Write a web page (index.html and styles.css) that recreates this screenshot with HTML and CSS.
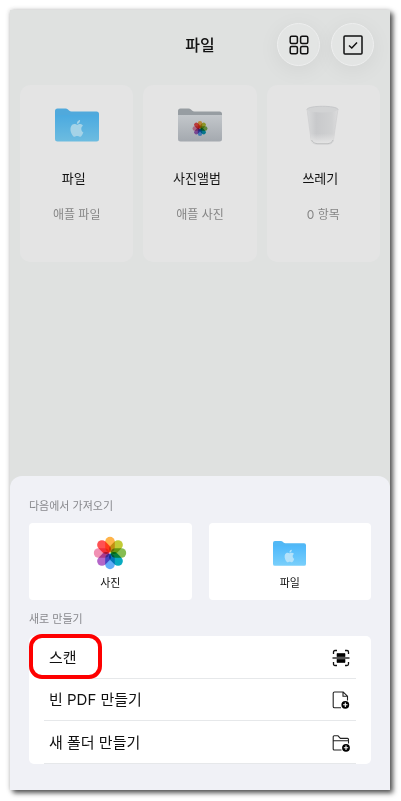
FILE: index.html
```html
<!DOCTYPE html>
<html lang="ko">
<head>
<meta charset="utf-8">
<meta name="viewport" content="width=device-width, initial-scale=1">
<title>파일</title>
<link rel="stylesheet" href="styles.css">
</head>
<body>
<svg class="defs" aria-hidden="true">
  <defs>
    <linearGradient id="blue" x1="0" y1="0" x2="0" y2="1">
      <stop offset="0" stop-color="#4fb9fb"/><stop offset="1" stop-color="#79cffb"/>
    </linearGradient>
    <linearGradient id="blue-dim" x1="0" y1="0" x2="0" y2="1">
      <stop offset="0" stop-color="#4baae0"/><stop offset="1" stop-color="#6dbce0"/>
    </linearGradient>
    <linearGradient id="gray" x1="0" y1="0" x2="0" y2="1">
      <stop offset="0" stop-color="#c3c7cb"/><stop offset="1" stop-color="#a4a9af"/>
    </linearGradient>
    <linearGradient id="glass" x1="0" y1="0" x2="1" y2="0">
      <stop offset="0" stop-color="#d9dadb"/><stop offset=".3" stop-color="#c8c9cb"/><stop offset=".8" stop-color="#d0d1d2"/><stop offset="1" stop-color="#dcdcdd"/>
    </linearGradient>
    <linearGradient id="glass-foot" x1="0" y1="0" x2="0" y2="1">
      <stop offset=".7" stop-color="#e6e6e6" stop-opacity="0"/><stop offset="1" stop-color="#e6e6e6"/>
    </linearGradient>
    <path id="folder-back" d="M0 3Q0 .5 2.500 .5H10.500Q12 .5 13 1.500L14 2.500Q15 3.500 16.500 3.500H41.500Q44 3.500 44 6V12H0Z"/>
    <path id="folder-front" d="M0 7H44V31Q44 33.500 41.500 33.500H2.500Q0 33.500 0 31Z"/>
    <path id="apple" d="M12.152 6.896c-.948 0-2.415-1.078-3.960-1.040-2.040.027-3.910 1.183-4.961 3.014-2.117 3.675-.546 9.103 1.519 12.090 1.013 1.454 2.208 3.090 3.792 3.039 1.520-.065 2.090-.987 3.935-.987 1.831 0 2.350.987 3.960.948 1.637-.026 2.676-1.480 3.676-2.948 1.156-1.688 1.636-3.325 1.662-3.415-.039-.013-3.182-1.221-3.220-4.857-.026-3.040 2.480-4.494 2.597-4.559-1.429-2.090-3.623-2.324-4.390-2.376-2-.156-3.675 1.090-4.610 1.090zM15.530 3.830c.843-1.012 1.400-2.427 1.245-3.830-1.207.052-2.662.805-3.532 1.818-.780.896-1.454 2.338-1.273 3.714 1.338.104 2.715-.688 3.559-1.701"/>
    <rect id="petal" class="petal" x="-4.800" y="-16.200" width="9.600" height="15.500" rx="4.800"/>
    <g id="flower">
      <use href="#petal" fill="#ffb44a"/>
      <use href="#petal" fill="#c2cb36" transform="rotate(45)"/>
      <use href="#petal" fill="#86bd52" transform="rotate(90)"/>
      <use href="#petal" fill="#08abc0" transform="rotate(135)"/>
      <use href="#petal" fill="#62adf8" transform="rotate(180)"/>
      <use href="#petal" fill="#b365c8" transform="rotate(225)"/>
      <use href="#petal" fill="#f190b3" transform="rotate(270)"/>
      <use href="#petal" fill="#ff5152" transform="rotate(315)"/>
    </g>
  </defs>
</svg>

<main class="screen">
  <header class="header">
    <h1 class="title">파일</h1>
    <div class="actions">
      <button class="round" type="button" aria-label="격자 보기">
        <svg width="20" height="20" viewBox="0 0 20 20" fill="none" stroke="#111" stroke-width="1.500">
          <rect x="1.200" y="1.200" width="7.200" height="7.200" rx="1.500"/><rect x="11.600" y="1.200" width="7.200" height="7.200" rx="1.500"/>
          <rect x="1.200" y="11.600" width="7.200" height="7.200" rx="1.500"/><rect x="11.600" y="11.600" width="7.200" height="7.200" rx="1.500"/>
        </svg>
      </button>
      <button class="round" type="button" aria-label="선택">
        <svg width="20" height="20" viewBox="0 0 20 20" fill="none" stroke="#111" stroke-width="1.500">
          <rect x="1" y="1" width="18" height="18" rx="1"/><path d="M6 10.500L8.800 13L14 7.600"/>
        </svg>
      </button>
    </div>
  </header>

  <section class="cards">
    <a class="card" href="#files">
      <svg width="44" height="34" viewBox="0 0 44 34">
        <use href="#folder-back" fill="#50a9dc"/><use href="#folder-front" fill="url(#blue-dim)"/>
        <use href="#apple" fill="#a5d3e7" transform="translate(14 12) scale(.66 .7)"/>
      </svg>
      <span class="name">파일</span><span class="meta">애플 파일</span>
    </a>
    <a class="card" href="#album">
      <svg width="44" height="34" viewBox="0 0 44 34">
        <use href="#folder-back" fill="#979da2"/><use href="#folder-front" fill="url(#gray)"/>
        <use href="#flower" transform="translate(22 20.500) scale(.46)"/>
      </svg>
      <span class="name">사진앨범</span><span class="meta">애플 사진</span>
    </a>
    <a class="card" href="#trash">
      <svg width="44" height="40" viewBox="0 0 44 40">
        <path d="M6 4L10 34.500Q10.500 39 15 39H28Q32 39 32.500 34.500L37 4Z" fill="url(#glass)" stroke="#d0d1d2" stroke-width=".8"/>
        <path d="M6 4L10 34.500Q10.500 39 15 39H28Q32 39 32.500 34.500L37 4Z" fill="url(#glass-foot)"/>
        <path d="M10.500 35Q12 38.700 16 38.700H27Q31 38.700 32 35" fill="none" stroke="#bfc0c1"/>
        <path d="M6 4.500C7 .2 36 .2 37 4.500Q35 7.500 21.500 7.500T6 4.500" fill="#d2d3d4"/>
        <path d="M6 4.500C7 .2 36 .2 37 4.500" fill="none" stroke="#c2c3c5" stroke-width=".8"/>
      </svg>
      <span class="name">쓰레기</span><span class="meta">0 항목</span>
    </a>
  </section>

  <section class="sheet">
    <h2 class="heading">다음에서 가져오기</h2>
    <div class="tiles">
      <button class="tile" type="button">
        <svg width="34" height="34" viewBox="-17 -17 34 34"><use href="#flower"/></svg>
        <span>사진</span>
      </button>
      <button class="tile" type="button">
        <svg width="33" height="34" viewBox="0 -6 44 45">
          <use href="#folder-back" fill="#52b8f5"/><use href="#folder-front" fill="url(#blue)"/>
          <use href="#apple" fill="#b4e2fa" transform="translate(14 12) scale(.66 .7)"/>
        </svg>
        <span>파일</span>
      </button>
    </div>
    <h2 class="heading">새로 만들기</h2>
    <div class="list">
      <button class="row highlighted" type="button">
        <span>스캔</span>
        <svg width="18" height="18" viewBox="0 0 18 18" fill="none" stroke="#111" stroke-width="1.300">
          <path d="M1.500 5V3Q1.500 1.500 3 1.500H5M13 1.500H15Q16.500 1.500 16.500 3V5M16.500 13V15Q16.500 16.500 15 16.500H13M5 16.500H3Q1.500 16.500 1.500 15V13"/>
          <path d="M5 4.500H13V7.800H5ZM5 10.200H13V13.500H5Z" fill="#000" stroke="#000" stroke-width=".6"/>
          <path d="M.5 9H17.500"/>
        </svg>
      </button>
      <button class="row" type="button">
        <span>빈 PDF 만들기</span>
        <svg width="18" height="18" viewBox="0 0 18 18" fill="none" stroke="#222" stroke-width="1.100">
          <path d="M9 16.800H2.500Q1.200 16.800 1.200 15.500V2.300Q1.200 1 2.500 1H11.200L15.500 5.200V9.500M11 1V5.300H15.500"/>
          <circle cx="13.300" cy="13.800" r="3.900" fill="#000" stroke="none"/><path d="M13.300 11.600V16M11.100 13.800H15.500" stroke="#fff"/>
        </svg>
      </button>
      <button class="row" type="button">
        <span>새 폴더 만들기</span>
        <svg width="18" height="18" viewBox="0 0 18 18" fill="none" stroke="#222" stroke-width="1.100">
          <path d="M9.500 16H2.200Q1.200 16 1.200 15V2.800Q1.200 1.800 2.200 1.800H6L8.400 4.400H15.500Q16.500 4.400 16.500 5.400V9.500M1.200 6.700H16.500"/>
          <circle cx="14" cy="13.800" r="3.900" fill="#000" stroke="none"/><path d="M14 11.600V16M11.800 13.800H16.200" stroke="#fff"/>
        </svg>
      </button>
    </div>
  </section>
</main>
</body>
</html>
```
FILE: styles.css
```css
*,
*::after {
  box-sizing: border-box;
}

body {
  margin: 0;
  padding: 10px 11px 11px 10px;
  background: #fff;
  color: #111;
  font-family: Inter, "Noto Sans CJK KR", sans-serif;
}

button {
  margin: 0;
  border: 0;
  color: inherit;
  font-family: inherit;
}

svg {
  display: block;
  flex: none;
}

.defs {
  position: absolute;
  width: 0;
  height: 0;
}

.petal {
  mix-blend-mode: multiply;
}

.screen {
  display: flex;
  flex-direction: column;
  min-height: calc(100vh - 21px);
  background: #dfe1e0;
  box-shadow: 3px 3px 5px rgba(0, 0, 0, .65), 0 0 5px rgba(0, 0, 0, .2);
}

.header {
  display: grid;
  grid-template-columns: 1fr auto 1fr;
  align-items: center;
  padding: 13px 16px 19px;
}

.title {
  grid-column: 2;
  margin: 0;
  font-size: 16px;
  line-height: 24px;
  font-weight: 500;
}

.actions {
  display: flex;
  justify-content: flex-end;
  gap: 11px;
}

.round {
  display: flex;
  align-items: center;
  justify-content: center;
  flex: none;
  width: 43px;
  height: 43px;
  padding: 0;
  border: 1px solid #eeefef;
  border-radius: 50%;
  background: #e3e5e4;
  box-shadow: 0 4px 22px rgba(0, 0, 0, .06);
}

.cards {
  display: grid;
  grid-template-columns: repeat(3, 1fr);
  gap: 10px;
  padding: 0 10px;
}

.card {
  display: grid;
  grid-template-rows: 54px 18px 22px;
  row-gap: 17px;
  align-items: center;
  justify-items: center;
  padding: 13px 0 36px;
  border-radius: 10px;
  background: #e4e4e4;
  color: inherit;
  text-decoration: none;
}

.name {
  padding-right: 6px;
  font-size: 13px;
  line-height: 18px;
}

.meta {
  color: #858585;
  font-size: 12px;
  line-height: 18px;
}

.sheet {
  margin-top: auto;
  padding: 21px 19px 26px;
  border-radius: 12px 12px 0 0;
  background: #f0f1f6;
}

.heading {
  margin: 0 0 8px;
  color: #88898d;
  font-size: 11px;
  line-height: 18px;
  font-weight: 400;
}

.tiles {
  display: grid;
  grid-template-columns: 1fr 1fr;
  gap: 17px;
  margin-bottom: 10px;
}

.tile {
  display: flex;
  flex-direction: column;
  align-items: center;
  gap: 4px;
  padding: 13px 0 8px;
  border-radius: 4px;
  background: #fff;
  font-size: 11px;
  line-height: 18px;
}

.list {
  display: grid;
  grid-auto-rows: 1fr;
  min-height: 128px;
  padding: 0 15px;
  border-radius: 5px;
  background: #fff;
}

.row {
  position: relative;
  display: flex;
  align-items: center;
  justify-content: space-between;
  padding: 2px 6px 0 5px;
  border-bottom: 1px solid #e6e8ea;
  background: none;
  font-size: 15px;
  line-height: 24px;
  text-align: left;
}

.highlighted::after {
  content: "";
  position: absolute;
  top: -2px;
  left: -15px;
  width: 73px;
  height: 45px;
  border: 4px solid #fe0000;
  border-radius: 13px;
}
```
